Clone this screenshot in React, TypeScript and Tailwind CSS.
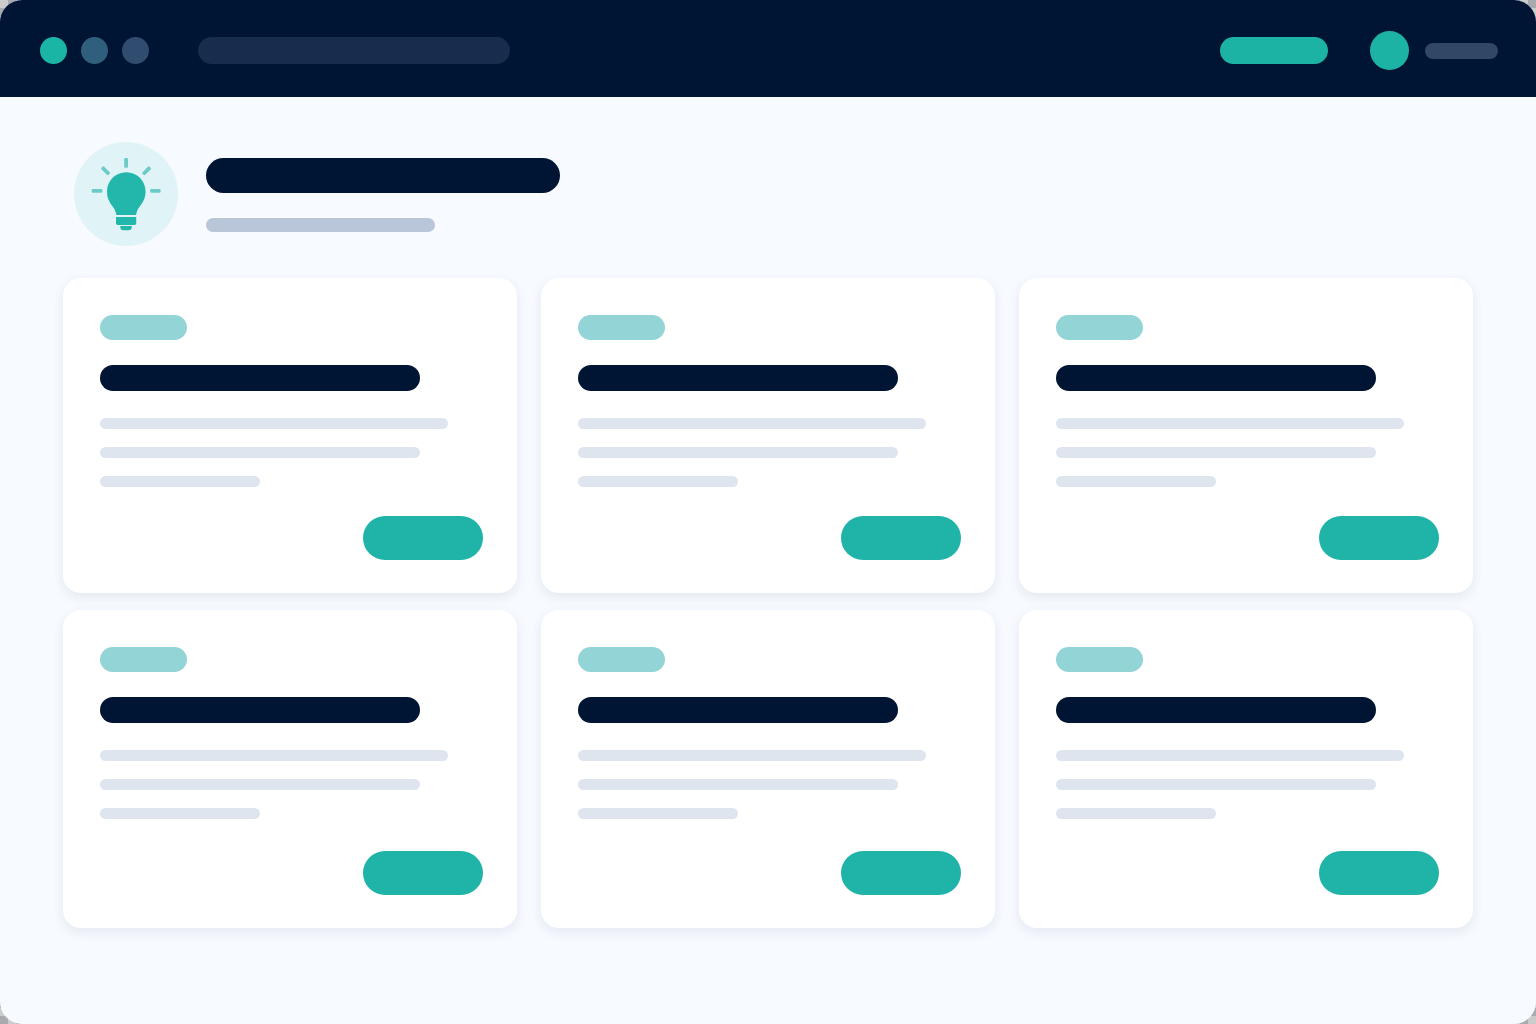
const cards = [1, 2, 3, 4, 5, 6]

function BulbIcon() {
  return (
    <svg
      className="w-26 h-26 shrink-0 rounded-full bg-[#e0f3f6]"
      viewBox="0 0 104 104"
      aria-hidden="true"
    >
      <g fill="#6bcbc8">
        <rect x="50.2" y="16" width="3.8" height="9.8" rx="1.2" />
        <rect x="17.7" y="47" width="10.6" height="3.8" rx="1.2" />
        <rect x="76.2" y="47" width="10.4" height="3.8" rx="1.2" />
        <rect x="26.6" y="26.9" width="10" height="3.8" rx="1.2" transform="rotate(45 31.6 28.8)" />
        <rect x="67.6" y="26.9" width="10" height="3.8" rx="1.2" transform="rotate(-45 72.6 28.8)" />
      </g>
      <g fill="#23b6aa">
        <path d="M52.3 30.2C63 30.2 71.6 38.6 71.6 49.4C71.6 55.5 69.3 59.6 66.2 63.7C63.8 67 62.6 69.6 62 73H42.4C41.8 69.6 40.6 67 38.2 63.7C35.1 59.6 33 55.5 33 49.4C33 38.6 41.6 30.2 52.3 30.2Z" />
        <path d="M42 75H62.2V81.2Q62.2 83 60.4 83H43.8Q42 83 42 81.2Z" />
        <path d="M46.3 84H57.8V85Q57.8 88.3 54.2 88.3H49.9Q46.3 88.3 46.3 85Z" />
      </g>
    </svg>
  )
}

function Header() {
  return (
    <header className="flex items-center justify-between h-[97px] pt-1 pl-10 pr-[38px] bg-[#001433]">
      <div className="flex items-center">
        <div className="flex gap-[14px]">
          <span className="w-[27px] h-[27px] rounded-full bg-[#1bb5a5]" />
          <span className="w-[27px] h-[27px] rounded-full bg-[#2f5f7c]" />
          <span className="w-[27px] h-[27px] rounded-full bg-[#304c6e]" />
        </div>
        <input
          type="search"
          aria-label="Search"
          className="ml-[49px] w-[312px] h-[27px] px-4 rounded-full bg-[#172d4d] font-['Inter',sans-serif] text-sm text-white"
        />
      </div>
      <div className="flex items-center">
        <button
          aria-label="New"
          className="w-[108px] h-[27px] rounded-full bg-[#1cb2a4]"
        />
        <span className="ml-[42px] w-[39px] h-[39px] rounded-full bg-[#1cb2a4]" />
        <span className="ml-4 w-[73px] h-4 rounded-full bg-[#304766]" />
      </div>
    </header>
  )
}

function Card() {
  return (
    <article className="flex flex-col pt-[37px] pb-[33px] pl-[37px] pr-[34px] rounded-[18px] bg-white shadow-[0_4px_12px_rgba(30,50,100,0.09)]">
      <div className="w-[87px] h-[25px] rounded-full bg-[#93d4d7]" />
      <div className="mt-[25px] w-80 max-w-full h-[26px] rounded-full bg-[#001433]" />
      <div className="flex flex-col gap-[18px] mt-[27px]">
        <div className="w-[348px] max-w-full h-[11px] rounded-full bg-[#dee5ee]" />
        <div className="w-80 max-w-full h-[11px] rounded-full bg-[#dee5ee]" />
        <div className="w-40 max-w-full h-[11px] rounded-full bg-[#dee5ee]" />
      </div>
      <div className="flex justify-end mt-auto pt-7">
        <button
          aria-label="Open"
          className="w-[120px] h-11 rounded-full bg-[#20b3a8]"
        />
      </div>
    </article>
  )
}

export default function App() {
  return (
    <div className="flex min-h-screen bg-[repeating-conic-gradient(#a9aaaf_0_25%,#cbcbcb_0_50%)] bg-size-[16px_16px]">
      <div className="flex-1 rounded-[22px] overflow-hidden bg-[#f7faff]">
        <Header />
        <main className="px-[63px] pt-[45px] pb-24">
          <section className="flex items-center gap-7 pl-[11px]">
            <BulbIcon />
            <div className="flex flex-col gap-[25px] pt-0.5">
              <div className="w-[354px] h-[35px] rounded-full bg-[#001433]" />
              <div className="w-[229px] h-[14px] rounded-full bg-[#b9c5d8]" />
            </div>
          </section>
          <section className="grid grid-cols-3 grid-rows-[minmax(315px,auto)_minmax(318px,auto)] gap-x-6 gap-y-[17px] mt-8">
            {cards.map((id) => (
              <Card key={id} />
            ))}
          </section>
        </main>
      </div>
    </div>
  )
}
